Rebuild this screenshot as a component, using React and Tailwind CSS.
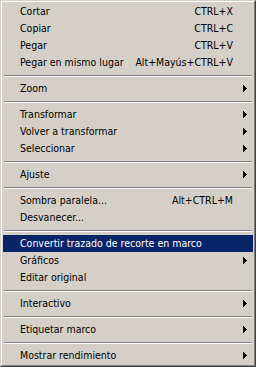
import React from "react";

const Arrow = () => (
  <svg width="4" height="7" viewBox="0 0 4 7" className="block" shapeRendering="crispEdges">
    <path d="M0 0h1v7H0zM1 1h1v5H1zM2 2h1v3H2zM3 3h1v1H3z" fill="currentColor" />
  </svg>
);

const groups = [
  [
    { label: "Cortar", sc: "CTRL+X" },
    { label: "Copiar", sc: "CTRL+C" },
    { label: "Pegar", sc: "CTRL+V" },
    { label: "Pegar en mismo lugar", sc: "Alt+Mayús+CTRL+V" },
  ],
  [{ label: "Zoom", sub: true }],
  [
    { label: "Transformar", sub: true },
    { label: "Volver a transformar", sub: true },
    { label: "Seleccionar", sub: true },
  ],
  [{ label: "Ajuste", sub: true }],
  [
    { label: "Sombra paralela...", sc: "Alt+CTRL+M" },
    { label: "Desvanecer..." },
  ],
  [
    { label: "Convertir trazado de recorte en marco", active: true },
    { label: "Gráficos", sub: true },
    { label: "Editar original" },
  ],
  [{ label: "Interactivo", sub: true }],
  [{ label: "Etiquetar marco", sub: true }],
  [{ label: "Mostrar rendimiento", sub: true }],
];

function Item({ label, sc, sub, active }) {
  return (
    <div
      className={
        "flex h-[17px] items-center pl-[17px] " +
        (active ? "bg-[#0a246a] text-white" : "text-black")
      }
    >
      <span className="flex-1 whitespace-nowrap">{label}</span>
      {sc && <span className="whitespace-nowrap">{sc}</span>}
      <span className="flex w-[20px] shrink-0 items-center pl-[10px]">{sub && <Arrow />}</span>
    </div>
  );
}

function Sep() {
  return (
    <div className="h-[9px] px-[1px] pt-[4px]">
      <div className="h-[2px] border-t border-b border-t-[#808080] border-b-white" />
    </div>
  );
}

export default function App() {
  return (
    <div
      className="w-[256px] h-[367px] bg-[#d4d0c8] border border-t-[#d4d0c8] border-l-[#d4d0c8] border-r-[#404040] border-b-[#404040] text-[10.5px] leading-[17px]"
      style={{ fontFamily: '"DejaVu Sans Condensed", "DejaVu Sans", sans-serif' }}
    >
      <div className="h-full border border-t-white border-l-white border-r-[#808080] border-b-[#808080] p-[1px]">
        {groups.map((g, i) => (
          <React.Fragment key={i}>
            {i > 0 && <Sep />}
            {g.map((it) => (
              <Item key={it.label} {...it} />
            ))}
          </React.Fragment>
        ))}
      </div>
    </div>
  );
}
